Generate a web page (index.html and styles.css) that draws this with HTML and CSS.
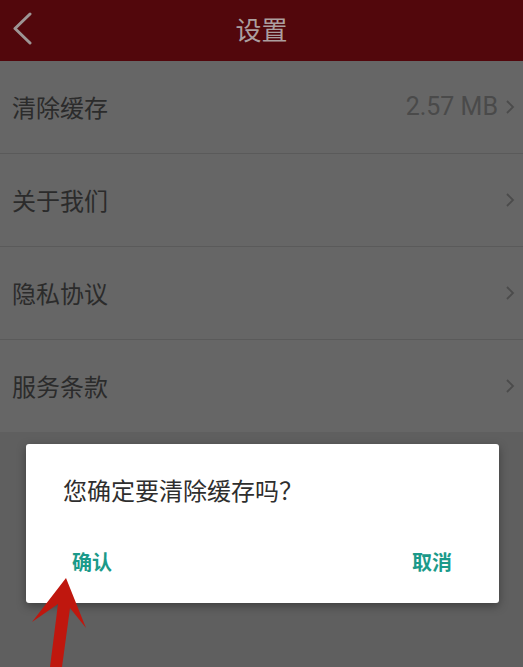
FILE: index.html
```html
<!DOCTYPE html>
<html lang="zh-CN">
<head>
<meta charset="utf-8">
<title>设置</title>
<link rel="stylesheet" href="styles.css">
</head>
<body>
<div class="screen">
  <header class="topbar">
    <div class="back">
      <svg width="24" height="36" viewBox="0 0 24 36"><polyline points="17,3 2,17.5 17,32" fill="none" stroke="#9d9595" stroke-width="3" stroke-linecap="round" stroke-linejoin="round"/></svg>
    </div>
    <h1 class="title">设置</h1>
    <div class="spacer"></div>
  </header>
  <ul class="list">
    <li class="row"><span class="label">清除缓存</span><span class="right"><span class="value">2.57 MB</span><svg class="chev" width="10" height="16" viewBox="0 0 10 16"><polyline points="2,2 8,8 2,14" fill="none" stroke="#4b4b4b" stroke-width="1.8"/></svg></span></li>
    <li class="row"><span class="label">关于我们</span><span class="right"><svg class="chev" width="10" height="16" viewBox="0 0 10 16"><polyline points="2,2 8,8 2,14" fill="none" stroke="#4b4b4b" stroke-width="1.8"/></svg></span></li>
    <li class="row"><span class="label">隐私协议</span><span class="right"><svg class="chev" width="10" height="16" viewBox="0 0 10 16"><polyline points="2,2 8,8 2,14" fill="none" stroke="#4b4b4b" stroke-width="1.8"/></svg></span></li>
    <li class="row last"><span class="label">服务条款</span><span class="right"><svg class="chev" width="10" height="16" viewBox="0 0 10 16"><polyline points="2,2 8,8 2,14" fill="none" stroke="#4b4b4b" stroke-width="1.8"/></svg></span></li>
  </ul>

  <div class="dialog">
    <p class="message">您确定要清除缓存吗？</p>
    <div class="actions">
      <span class="btn">确认</span>
      <span class="btn">取消</span>
    </div>
  </div>

  <svg class="arrow" width="523" height="667" viewBox="0 0 523 667">
    <polygon points="66,578 86,628 70,608 62,667 50,667 58,604 32,622" fill="#bf170e"/>
  </svg>
</div>
</body>
</html>
```

FILE: styles.css
```css
* { box-sizing: border-box; }
html, body { margin: 0; padding: 0; }
body {
  width: 523px;
  height: 667px;
  overflow: hidden;
  background: #5f5f5f;
  font-family: "Noto Sans CJK SC", "Noto Sans", sans-serif;
}
.screen {
  position: relative;
  width: 523px;
  height: 667px;
  background: #5f5f5f;
}
.topbar {
  height: 61px;
  background: #52070c;
  display: grid;
  grid-template-columns: 1fr auto 1fr;
  align-items: center;
}
.back {
  padding-left: 13px;
  display: flex;
  align-items: center;
  height: 61px;
  padding-bottom: 4px;
}
.back svg { display: block; }
.title {
  margin: 0;
  font-size: 26px;
  font-weight: 400;
  line-height: 30px;
  color: #ab9f9f;
  letter-spacing: 0;
  padding-bottom: 4px;
}
.list {
  list-style: none;
  margin: 0;
  padding: 0;
  background: #666666;
}
.row {
  height: 93px;
  display: flex;
  align-items: center;
  justify-content: space-between;
  padding: 0 8px 0 12px;
  border-bottom: 1px solid #5a5a5a;
}
.row.last { border-bottom: none; height: 92px; }
.label {
  font-size: 24px;
  line-height: 28px;
  color: #2b2b2b;
}
.right {
  display: flex;
  align-items: center;
  gap: 7px;
}
.value {
  font-family: Roboto, "Noto Sans", sans-serif;
  font-size: 25px;
  line-height: 28px;
  color: #4a4a4a;
}
.chev { display: block; }

.dialog {
  position: absolute;
  left: 26px;
  top: 444px;
  width: 473px;
  height: 159px;
  background: #ffffff;
  border-radius: 3px;
  box-shadow: 0 3px 10px rgba(0,0,0,0.35);
  padding: 31px 0 0 37px;
  display: flex;
  flex-direction: column;
}
.message {
  margin: 0;
  font-size: 24px;
  line-height: 29px;
  color: #2e2e2e;
}
.actions {
  margin-top: 46px;
  display: flex;
  justify-content: space-between;
  padding: 0 47px 0 9px;
}
.btn {
  font-size: 20px;
  line-height: 24px;
  font-weight: 700;
  color: #1b9a8a;
}
.arrow {
  position: absolute;
  left: 0;
  top: 0;
  pointer-events: none;
}
```
